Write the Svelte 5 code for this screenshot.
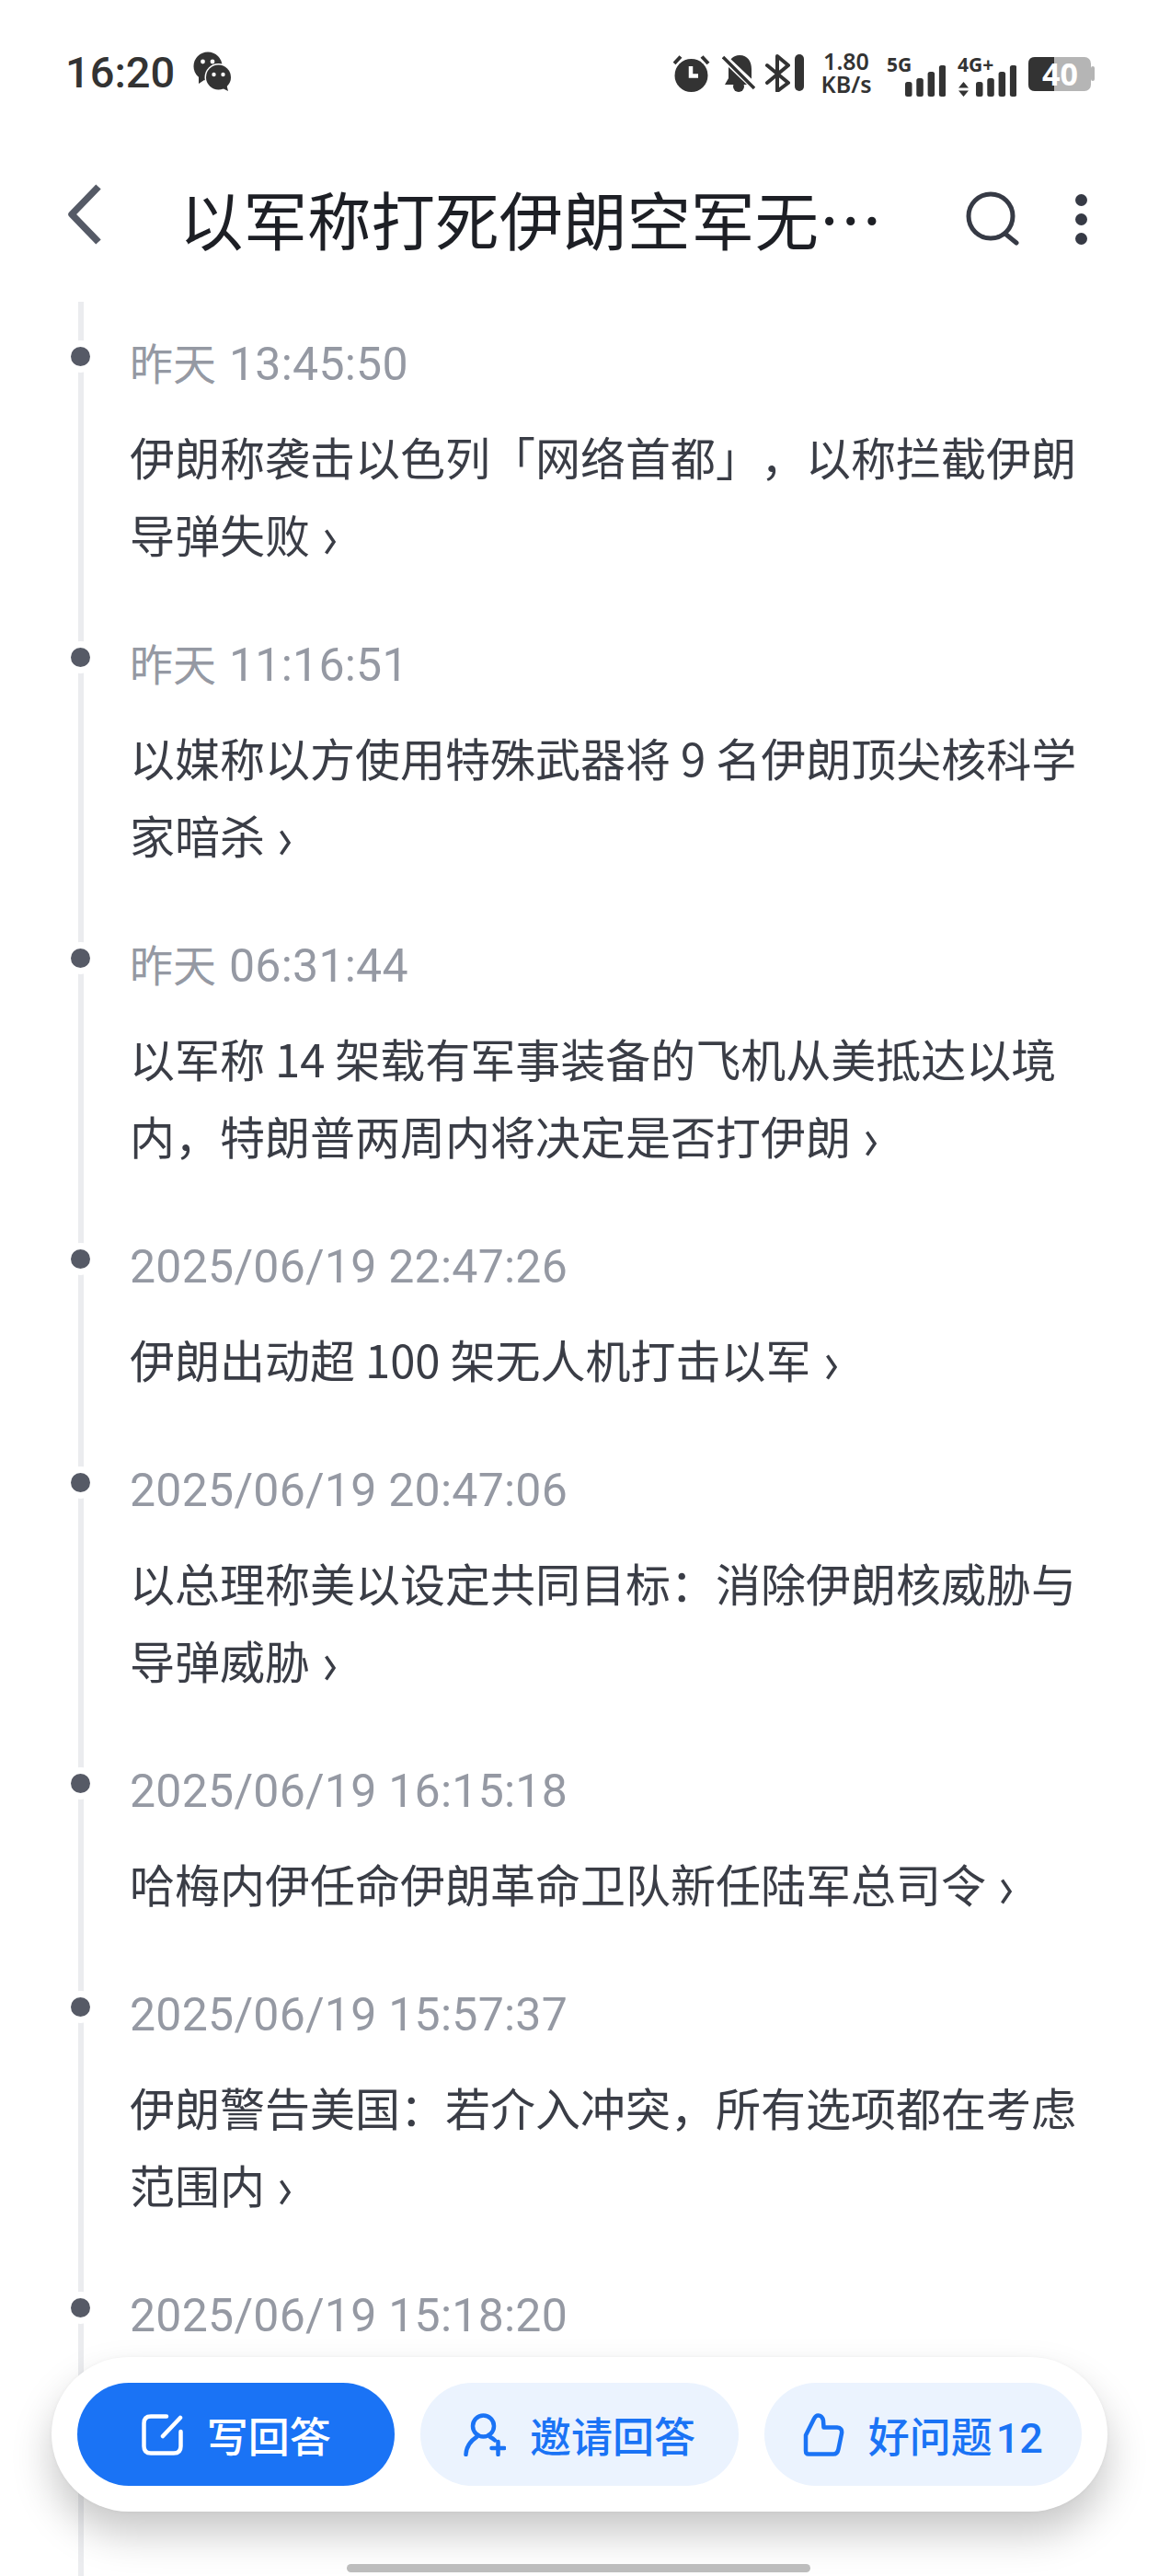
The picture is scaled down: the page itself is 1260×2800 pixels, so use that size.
<script>
    const items = [
        { day: '昨天', time: '13:45:50', text: '伊朗称袭击以色列「网络首都」，以称拦截伊朗导弹失败' },
        { day: '昨天', time: '11:16:51', text: '以媒称以方使用特殊武器将 9 名伊朗顶尖核科学家暗杀' },
        { day: '昨天', time: '06:31:44', text: '以军称 14 架载有军事装备的飞机从美抵达以境内，特朗普两周内将决定是否打伊朗' },
        { time: '2025/06/19 22:47:26', text: '伊朗出动超 100 架无人机打击以军' },
        { time: '2025/06/19 20:47:06', text: '以总理称美以设定共同目标：消除伊朗核威胁与导弹威胁' },
        { time: '2025/06/19 16:15:18', text: '哈梅内伊任命伊朗革命卫队新任陆军总司令' },
        { time: '2025/06/19 15:57:37', text: '伊朗警告美国：若介入冲突，所有选项都在考虑范围内' },
        { time: '2025/06/19 15:18:20', text: '' }
    ];
    const barTops = [83, 79, 72, 65];
</script>

<div class="page">
    <header class="status">
        <div class="clock">
            <span class="time">16:20</span>
            <!-- wechat -->
            <svg class="wechat" viewBox="210 56 42 44" width="42" height="44">
                <circle cx="226" cy="72" r="15.5" fill="#333" />
                <path d="M216 82 L216 91 L225 85 Z" fill="#333" />
                <circle cx="220.5" cy="67" r="2.4" fill="#fff" />
                <circle cx="231" cy="67" r="2.4" fill="#fff" />
                <circle cx="237.5" cy="84" r="15" fill="#fff" />
                <circle cx="237.5" cy="84" r="13.5" fill="#333" />
                <path d="M240 95 L248 99 L246 91 Z" fill="#333" />
                <circle cx="232.5" cy="81" r="2.2" fill="#fff" />
                <circle cx="242.5" cy="81" r="2.2" fill="#fff" />
            </svg>
        </div>
        <div class="icons">
            <svg class="alarm" viewBox="732 56 40 42" width="40" height="42">
                <circle cx="751.5" cy="80" r="18" fill="#333" />
                <path d="M733 67 L740 59.5 M770 67 L763 59.5" stroke="#333" stroke-width="4" fill="none" />
                <path d="M751 70 V80.5 H759" stroke="#fff" stroke-width="4.5" fill="none" />
            </svg>
            <svg class="bell" viewBox="785 56 36 42" width="36" height="42">
                <path d="M804 58 C813 58 817 65 817 73 V84 L819 90 H788 L792 83 V70 C792 63 797 58 804 58 Z" fill="#333" />
                <circle cx="803" cy="92" r="6" fill="#333" />
                <path d="M782 56 L820 92" stroke="#fff" stroke-width="8" />
                <path d="M786 60 L820 94" stroke="#333" stroke-width="3.5" />
            </svg>
            <svg class="bt" viewBox="832 56 42 42" width="42" height="42">
                <path d="M834 69 L857 88 L845 97 V59 L857 69 L834 88" stroke="#333" stroke-width="4" stroke-linejoin="round" stroke-linecap="round" fill="none" />
                <rect x="864" y="57" width="10" height="40" rx="5" fill="#333" />
            </svg>
            <div class="speed"><span>1.80</span><span>KB/s</span></div>
            <svg class="net five" viewBox="964 44 64 56" width="64" height="56">
                <text x="964" y="72" class="net-label">5G</text>
                {#each barTops as top, i}
                    <rect x={984 + i * 12.3} y={top} width="7.5" height={99 - top} rx="2.5" fill="#333" />
                {/each}
            </svg>
            <svg class="net" viewBox="1041 44 64 56" width="64" height="56">
                <text x="1041" y="72" class="net-label">4G+</text>
                <path d="M1047.5 83 L1053 89.5 H1042 Z M1042 92.5 H1053 L1047.5 99 Z" fill="#333" />
                {#each barTops as top, i}
                    <rect x={1061 + i * 12.3} y={top} width="7.5" height={99 - top} rx="2.5" fill="#333" />
                {/each}
            </svg>
            <svg class="battery" viewBox="1118 52 72 56" width="72" height="56">
                <rect x="1118" y="62" width="68" height="37" rx="7" fill="#b5b5b5" />
                <path d="M1146 62 H1125 Q1118 62 1118 69 V92 Q1118 99 1125 99 H1146 Z" fill="#333" />
                <rect x="1186" y="72" width="4" height="16" rx="2" fill="#b5b5b5" />
                <text x="1133" y="93" class="batt-label">40</text>
            </svg>
        </div>
    </header>

    <nav class="nav">
        <svg class="back" viewBox="0 0 40 68" width="40" height="68">
            <path d="M35 4 L6 34 L35 64" stroke="#555a66" stroke-width="7.5" stroke-linejoin="round" fill="none" />
        </svg>
        <h1 class="title" lang="zh-CN">以军称打死伊朗空军无…</h1>
        <svg class="search" viewBox="0 0 60 62" width="60" height="62">
            <circle cx="28" cy="30" r="24" stroke="#363a45" stroke-width="5" fill="none" />
            <path d="M45 50 L56 59" stroke="#363a45" stroke-width="5" stroke-linecap="round" />
        </svg>
        <div class="more"><i></i><i></i><i></i></div>
    </nav>

    <main class="timeline" lang="zh-CN">
        {#each items as item}
            <section class="item">
                <span class="dot"></span>
                <div class="date">{#if item.day}<span class="day">{item.day}</span>{/if}{item.time}</div>
                {#if item.text}
                    <p class="body">{item.text}<svg class="arrow" viewBox="0 0 12 28" width="12" height="28"><path d="M1.5 1.5 L10 14 L1.5 26.5" stroke="#3a3d46" stroke-width="3.5" fill="none" /></svg></p>
                {/if}
            </section>
        {/each}
    </main>

    <div class="actions" lang="zh-CN">
        <button class="btn primary">
            <svg viewBox="0 0 45 45" width="45" height="45">
                <path d="M27 2.5 H10 Q2.5 2.5 2.5 10 V35 Q2.5 42.5 10 42.5 H35 Q42.5 42.5 42.5 35 V19" stroke="#fff" stroke-width="4.5" fill="none" stroke-linecap="round" />
                <path d="M42 4 L23 24" stroke="#fff" stroke-width="4.5" stroke-linecap="round" />
            </svg>
            <span>写回答</span>
        </button>
        <button class="btn">
            <svg viewBox="0 0 46 47" width="46" height="47">
                <circle cx="21.5" cy="14" r="11.5" stroke="#1a73f5" stroke-width="4.5" fill="none" />
                <path d="M2.5 45 Q3 33 14 26 M29 26 Q32 27.5 34 29.5" stroke="#1a73f5" stroke-width="4.5" fill="none" stroke-linecap="round" />
                <path d="M37.5 31 V45 M30.5 38 H44.5" stroke="#1a73f5" stroke-width="4.5" stroke-linecap="round" />
            </svg>
            <span>邀请回答</span>
        </button>
        <button class="btn">
            <svg viewBox="0 0 45 47" width="45" height="47">
                <path d="M3 24 L12 6 Q14 2 17 2.5 Q21 3 22 8 L22.5 15.5 H37 Q43 16 42 22 L38.5 39 Q37.5 44.5 33 44.5 H6 Q3 44.5 3 41 Z" stroke="#1a73f5" stroke-width="4.5" stroke-linejoin="round" fill="none" />
            </svg>
            <span>好问题<span class="count">12</span></span>
        </button>
    </div>

    <div class="home"></div>
</div>

<style>
    :global(body) {
        margin: 0;
        background: #fff;
    }

    .page {
        position: relative;
        width: 1260px;
        height: 2800px;
        overflow: hidden;
        background: #fff;
        font-family: Roboto, "Noto Sans CJK SC", sans-serif;
    }

    .status {
        display: flex;
        justify-content: space-between;
        align-items: center;
        height: 156px;
        padding: 0 70px 0 71px;
        box-sizing: border-box;
    }

    .clock {
        display: flex;
        align-items: center;
        gap: 20px;
    }

    .time {
        font-size: 47px;
        font-weight: 500;
        color: #333;
    }

    .icons {
        display: flex;
        align-items: flex-end;
        height: 56px;
    }

    .icons svg {
        display: block;
    }

    .alarm,
    .bell,
    .bt {
        margin-bottom: 6px;
    }

    .battery {
        margin-bottom: -2px;
    }

    .bell { margin-left: 13px; }
    .bt { margin-left: 11px; }
    .speed { margin-left: 18px; }
    .net { margin-left: 13px; }
    .net.five { margin-left: 16px; }
    .battery { margin-left: 13px; }

    .speed {
        display: flex;
        flex-direction: column;
        width: 56px;
        margin-bottom: 2px;
        font-family: "Noto Sans", sans-serif;
        font-size: 25px;
        font-weight: 600;
        line-height: 25px;
        color: #333;
        text-align: center;
    }

    .net-label {
        font-family: "Noto Sans", sans-serif;
        font-size: 21px;
        font-weight: 700;
        fill: #333;
    }

    .batt-label {
        font-family: "Noto Sans", sans-serif;
        font-size: 34px;
        font-weight: 700;
        fill: #fff;
    }

    .nav {
        display: flex;
        align-items: center;
        height: 160px;
        padding: 0 78px 0 72px;
    }

    .back {
        margin-bottom: 6px;
    }

    .title {
        flex: 1;
        margin: 0 0 0 83px;
        font-family: "Noto Sans CJK SC", sans-serif;
        font-size: 69.5px;
        font-weight: 400;
        color: #1d1f25;
        white-space: nowrap;
    }

    .more {
        display: flex;
        flex-direction: column;
        gap: 8px;
        margin: 4px 0 0 60px;
    }

    .more i {
        display: block;
        width: 13px;
        height: 13px;
        border-radius: 50%;
        background: #363a45;
    }

    .timeline {
        position: relative;
        margin-top: 12px;
        padding-top: 38px;
        height: 2484px;
        box-sizing: border-box;
    }

    .timeline::before {
        content: '';
        position: absolute;
        left: 85px;
        top: 0;
        bottom: 0;
        width: 6px;
        background: #ebecef;
    }

    .item {
        position: relative;
        padding: 0 78px 71px 141px;
    }

    .dot {
        position: absolute;
        left: 70px;
        top: 4px;
        width: 21px;
        height: 21px;
        border: 7.5px solid #fff;
        border-radius: 50%;
        background: #565a66;
    }

    .date {
        height: 60px;
        font-size: 50px;
        line-height: 60px;
        letter-spacing: 0.25px;
        color: #9599a3;
    }

    .day {
        margin-right: 14px;
        font-size: 47px;
        letter-spacing: 0;
    }

    .body {
        margin: 28px 0 0;
        width: 1040px;
        font-family: "Noto Sans CJK SC", sans-serif;
        font-size: 49px;
        line-height: 84px;
        color: #3a3d46;
        text-spacing-trim: space-all;
    }

    .arrow {
        margin-left: 16px;
        vertical-align: -2px;
    }

    .actions {
        position: absolute;
        left: 56px;
        top: 2562px;
        display: flex;
        gap: 28px;
        width: 1148px;
        height: 168px;
        padding: 28px;
        box-sizing: border-box;
        border-radius: 84px;
        background: #fff;
        box-shadow: 0 24px 44px rgba(0, 0, 0, 0.22), 0 0 4px rgba(0, 0, 0, 0.04);
    }

    .btn {
        display: flex;
        flex: 1;
        align-items: center;
        justify-content: center;
        gap: 26px;
        height: 112px;
        border: none;
        border-radius: 56px;
        background: #ebf3fe;
        color: #1a73f5;
        font-family: "Noto Sans CJK SC", sans-serif;
        font-size: 45px;
        font-weight: 500;
    }

    .primary {
        background: #1a73f5;
        color: #fff;
    }

    .count {
        margin-left: 4px;
        font-family: Roboto, sans-serif;
    }

    .home {
        position: absolute;
        left: 377px;
        top: 2787px;
        width: 504px;
        height: 9px;
        border-radius: 5px;
        background: #bdbdbd;
    }
</style>
